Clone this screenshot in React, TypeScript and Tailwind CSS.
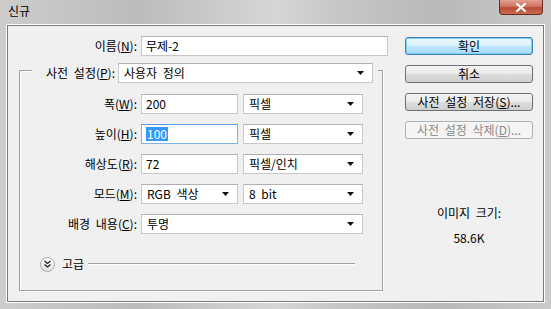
import React from 'react';

const font = { fontFamily: '"Noto Sans CJK KR", "Noto Sans", sans-serif' };

function Arrow() {
  return (
    <svg width="7" height="4" viewBox="0 0 7 4" className="shrink-0">
      <path d="M0 0H7L3.5 4Z" fill="#111" />
    </svg>
  );
}

function Combo({ value, className }: { value: string; className: string }) {
  return (
    <div className={`h-[20px] flex items-center justify-between bg-white border border-[#c8c8c8] border-t-[#b0b0b0] pl-[5px] pr-[8px] ${className}`}>
      <span className="leading-none">{value}</span>
      <Arrow />
    </div>
  );
}

function Field({ children, className, focus }: { children: React.ReactNode; className: string; focus?: boolean }) {
  return (
    <div
      className={`h-[20px] flex items-center bg-white border pl-[4px] ${
        focus ? 'border-[#7eb4ea] border-t-[#569de5]' : 'border-[#c8c8c8] border-t-[#b0b0b0]'
      } ${className}`}
    >
      {children}
    </div>
  );
}

function Label({ children, className }: { children: React.ReactNode; className: string }) {
  return <div className={`text-right shrink-0 leading-[20px] ${className}`}>{children}</div>;
}

function Row({ label, children }: { label: React.ReactNode; children: React.ReactNode }) {
  return (
    <div className="flex items-center h-[20px]">
      <Label className="w-[117px] mr-[4px]">{label}</Label>
      {children}
    </div>
  );
}

function Button({ children, primary, disabled }: { children: React.ReactNode; primary?: boolean; disabled?: boolean }) {
  let cls = 'border-[#707070] bg-[linear-gradient(#f3f3f3_0%,#ebebeb_50%,#dddddd_51%,#cfcfcf_100%)] text-black';
  if (primary)
    cls = 'border-[#3c7fb1] bg-[linear-gradient(#eaf6fd_0%,#d9f0fc_50%,#bee6fd_51%,#a7d9f5_100%)] text-black shadow-[inset_0_0_0_1px_#7fd0f5]';
  if (disabled) cls = 'border-[#adb2b5] bg-[#f4f4f4] text-[#8a8a8a]';
  return (
    <div className={`h-[18px] w-[128px] rounded-[3px] border flex items-center justify-center leading-none ${cls}`}>
      {children}
    </div>
  );
}

export default function App() {
  return (
    <div
      className="w-[551px] h-[309px] flex flex-col text-[12px] text-black [word-spacing:3px] bg-[linear-gradient(90deg,#cdcdcd_0%,#bcbcbc_25%,#d6d6d6_50%,#c6c6c6_62%,#b9b9b9_80%,#cacaca_100%)] overflow-hidden"
      style={font}
    >
      {/* Title bar */}
      <div className="h-[24px] flex items-start shrink-0">
        <div className="pl-[8px] pt-[3px] leading-[16px] text-[12px]">신규</div>
        <div className="ml-auto mr-[8px] w-[44px] h-[15px] rounded-b-[4px] border border-t-0 border-[#6b2b20] bg-[linear-gradient(#e2a091_0%,#cf7561_45%,#b84a35_55%,#cc6b55_100%)] flex items-center justify-center">
          <svg width="10" height="9" viewBox="0 0 10 9">
            <path d="M1 1L9 8M9 1L1 8" stroke="#fff" strokeWidth="2.2" strokeLinecap="square" />
          </svg>
        </div>
      </div>

      {/* Client */}
      <div className="flex-1 mx-[6px] mb-[6px] border border-white">
        <div className="h-full border border-[#7a7a7a] bg-[#f0f0f0] flex">
          {/* Left */}
          <div className="w-[380px] pt-[10px] flex flex-col">
            <div className="flex items-center h-[20px]">
              <Label className="w-[129px] mr-[4px]">
                이름(<u>N</u>):
              </Label>
              <Field className="w-[247px]">무제-2</Field>
            </div>

            <div className="ml-[11px] mt-[14px] w-[364px] h-[221px] border border-[#a0a0a0] shadow-[inset_1px_1px_0_#ffffff,1px_1px_0_#ffffff] flex flex-col">
              <div className="-mt-[8px] ml-[12px] w-[346px] bg-[#f0f0f0] flex items-center h-[20px]">
                <Label className="flex-1 pr-[3px]">
                  사전 설정(<u>P</u>):
                </Label>
                <Combo value="사용자 정의" className="w-[255px] mr-[5px]" />
              </div>

              <div className="mt-[11px] flex flex-col gap-[10px]">
                <Row
                  label={
                    <>
                      폭(<u>W</u>):
                    </>
                  }
                >
                  <Field className="w-[97px] mr-[5px]">200</Field>
                  <Combo value="픽셀" className="w-[120px]" />
                </Row>
                <Row
                  label={
                    <>
                      높이(<u>H</u>):
                    </>
                  }
                >
                  <Field className="w-[97px] mr-[5px]" focus>
                    <span className="bg-[#3399ff] text-white leading-[14px] px-[1px]">100</span>
                  </Field>
                  <Combo value="픽셀" className="w-[120px]" />
                </Row>
                <Row
                  label={
                    <>
                      해상도(<u>R</u>):
                    </>
                  }
                >
                  <Field className="w-[97px] mr-[5px]">72</Field>
                  <Combo value="픽셀/인치" className="w-[120px]" />
                </Row>
                <Row
                  label={
                    <>
                      모드(<u>M</u>):
                    </>
                  }
                >
                  <Combo value="RGB 색상" className="w-[97px] mr-[5px]" />
                  <Combo value="8 bit" className="w-[120px]" />
                </Row>
                <Row
                  label={
                    <>
                      배경 내용(<u>C</u>):
                    </>
                  }
                >
                  <Combo value="투명" className="w-[222px]" />
                </Row>
              </div>

              <div className="mt-[22px] flex items-center h-[16px]">
                <div className="ml-[20px] w-[15px] h-[15px] rounded-full border border-[#a9a9a9] bg-[linear-gradient(#ffffff,#e2e2e2)] flex items-center justify-center">
                  <svg width="7" height="8" viewBox="0 0 7 8">
                    <path d="M0.5 1L3.5 3.5L6.5 1M0.5 4.5L3.5 7L6.5 4.5" stroke="#222" strokeWidth="1.3" fill="none" />
                  </svg>
                </div>
                <span className="ml-[7px] leading-none">고급</span>
                <div className="ml-[4px] mr-[27px] flex-1 h-[2px] border-t border-[#a0a0a0] border-b border-b-white" />
              </div>
            </div>
          </div>

          {/* Right */}
          <div className="ml-[17px] w-[128px] pt-[11px] flex flex-col">
            <div className="flex flex-col gap-[10px]">
              <Button primary>확인</Button>
              <Button>취소</Button>
              <Button>
                사전 설정 저장(<u>S</u>)...
              </Button>
              <Button disabled>
                사전 설정 삭제(<u>D</u>)...
              </Button>
            </div>
            <div className="mt-[66px] text-center leading-[16px]">이미지 크기:</div>
            <div className="mt-[9px] text-center leading-[16px]">58.6K</div>
          </div>
        </div>
      </div>
    </div>
  );
}
